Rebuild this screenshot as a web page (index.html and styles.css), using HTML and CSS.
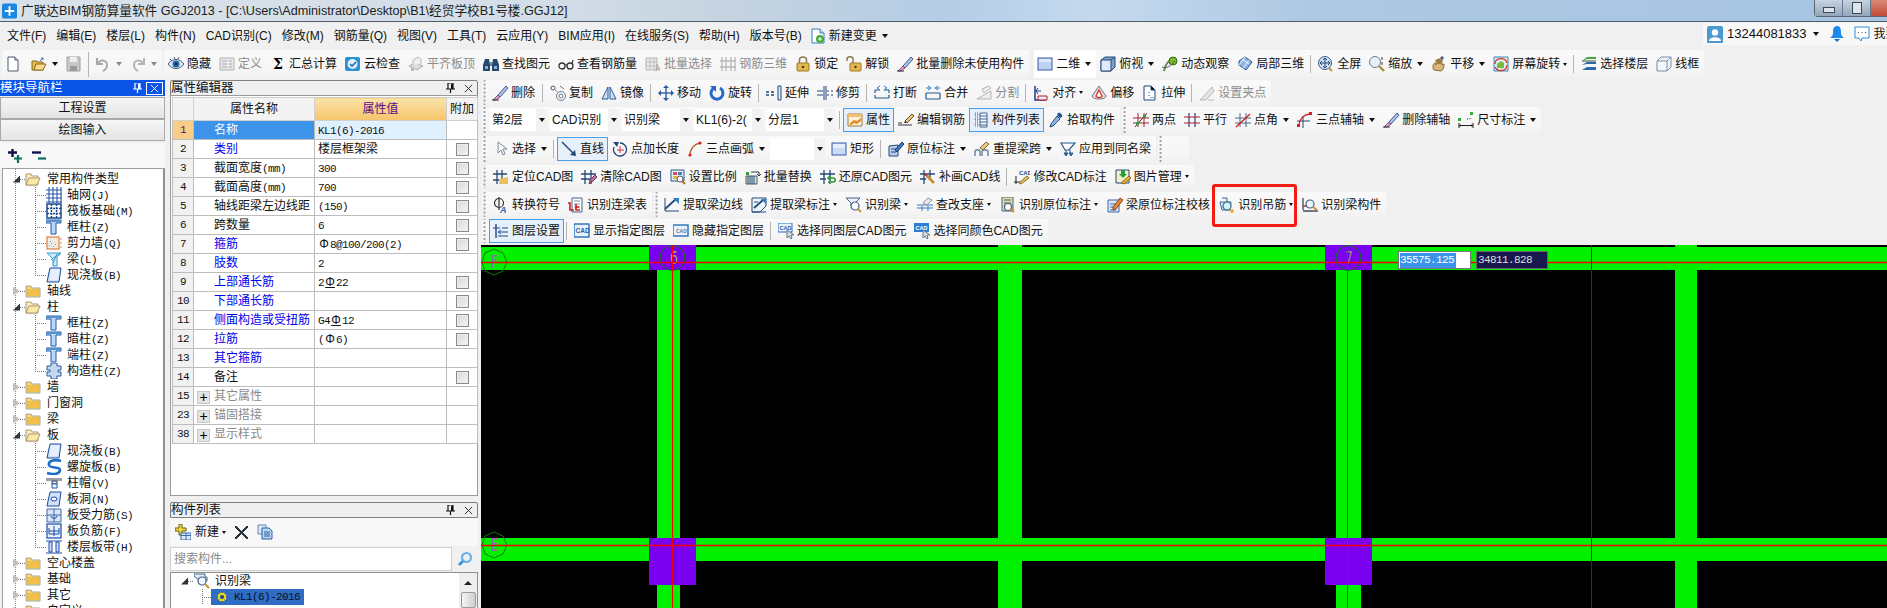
FILE: index.html
```html
<!DOCTYPE html>
<html lang="zh-CN">

<head>
    <meta charset="UTF-8">
    <title>广联达BIM钢筋算量软件 GGJ2013</title>
    <link rel="stylesheet" href="styles.css">
</head>

<body>
    <svg class="defs" width="0" height="0">
        <!-- main toolbar -->
        <symbol id="i-new" viewBox="0 0 16 16"><path d="M1 1h7l3 3v11H1z" fill="#fff" stroke="#4a5a70"/><path d="M8 1v3h3" fill="#cfe0f0" stroke="#4a5a70"/></symbol>
        <symbol id="i-open" viewBox="0 0 16 16"><path d="M1 5h5l1 1h5v8H1z" fill="#e6b84a" stroke="#8a6a20"/><path d="M3 14l2-6h10l-3 6z" fill="#f8dc88" stroke="#8a6a20"/><path d="M9 5l3-3M12 2h-2M12 2v2" stroke="#3a6ab0" fill="none"/></symbol>
        <symbol id="i-save" viewBox="0 0 16 16"><path d="M1 1h13v14H1z" fill="#c8c8c8" stroke="#a0a0a0"/><path d="M4 1h7v5H4z" fill="#eee"/><path d="M4 10h7v5H4z" fill="#9a9a9a"/></symbol>
        <symbol id="i-undo" viewBox="0 0 16 16"><path d="M2 2v6h6M3 7c3-4 9-3 9 2 0 3-2 5-4 6" fill="none" stroke="#a8a8a8" stroke-width="2"/></symbol>
        <symbol id="i-redo" viewBox="0 0 16 16"><path d="M14 2v6H8M13 7c-3-4-9-3-9 2 0 3 2 5 4 6" fill="none" stroke="#b4b4b4" stroke-width="2"/></symbol>
        <symbol id="i-eye" viewBox="0 0 16 16"><path d="M0 8c4-6 12-6 16 0-4 6-12 6-16 0z" fill="#dce8f4" stroke="#44607e"/><circle cx="8" cy="8" r="3.5" fill="#2a6aa8"/><circle cx="8" cy="8" r="1.4" fill="#0c2a48"/><path d="M2 3l2 2M6 1l1 2M11 1l-1 2" stroke="#44607e"/></symbol>
        <symbol id="i-def" viewBox="0 0 16 16"><path d="M1 2h14v12H1z" fill="#e8e8e8" stroke="#b0b0b0"/><path d="M3 5h5M3 8h5M3 11h5M10 5h3M10 8h3M10 11h3" stroke="#a8a8a8"/></symbol>
        <symbol id="i-cloud" viewBox="0 0 16 16"><rect x="0" y="1" width="15" height="14" rx="2" fill="#2a90d8"/><circle cx="7.500" cy="8" r="5" fill="#dff0fc"/><path d="M5 8l2 2 4-4" fill="none" stroke="#1a70b8" stroke-width="1.600"/></symbol>
        <symbol id="i-flush" viewBox="0 0 16 16"><path d="M1 10l6-3 8 3-6 4z" fill="#ddd" stroke="#b0b0b0"/><path d="M5 9V4l5-3 3 2v5" fill="#eee" stroke="#bbb"/><path d="M3 15v-4h3v4z" fill="#bbb"/></symbol>
        <symbol id="i-bino" viewBox="0 0 16 16"><path d="M2 3h4l1 6v6H0V9zM10 3h4l2 6v6H9V9z" fill="#24486e"/><path d="M7 6h2v4H7z" fill="#6a88a6"/><path d="M2 10h3v3H2zM11 10h3v3h-3z" fill="#8ab0d4"/></symbol>
        <symbol id="i-glasses" viewBox="0 0 16 16"><circle cx="4" cy="10" r="3" fill="none" stroke="#333" stroke-width="1.300"/><circle cx="12" cy="10" r="3" fill="none" stroke="#333" stroke-width="1.300"/><path d="M7 9h2M14 8l1-4" stroke="#333" stroke-width="1.200"/></symbol>
        <symbol id="i-batch" viewBox="0 0 16 16"><path d="M1 2h11v12H1z" fill="#ececec" stroke="#b4b4b4"/><path d="M1 6h11M1 10h11M5 2v12M9 2v12" stroke="#bcbcbc"/><path d="M12 8l3 6-3-1-1 2z" fill="#d0d0d0" stroke="#aaa"/></symbol>
        <symbol id="i-rebar3d" viewBox="0 0 16 16"><path d="M2 1v14M6 1v14M11 1v14M15 1v14M0 5h16M0 11h16" stroke="#b8b8b8" stroke-width="1.300"/></symbol>
        <symbol id="i-lock" viewBox="0 0 16 16"><path d="M4.500 7V4c0-4 7-4 7 0v3" fill="none" stroke="#8a7a50" stroke-width="1.500"/><rect x="2" y="7" width="12" height="8" rx="1" fill="#e4b850" stroke="#9a7a28"/><circle cx="8" cy="11" r="1.300" fill="#5a4010"/></symbol>
        <symbol id="i-unlock" viewBox="0 0 16 16"><path d="M1 5V3c0-3 6-3 6 0v4" fill="none" stroke="#8a7a50" stroke-width="1.500"/><rect x="4" y="7" width="11" height="8" rx="1" fill="#e4b850" stroke="#9a7a28"/><circle cx="9.500" cy="11" r="1.300" fill="#5a4010"/></symbol>
        <symbol id="i-brush" viewBox="0 0 16 16"><path d="M6 10l8-9 2 2-8 9z" fill="#b0c4e8" stroke="#3a5a9a"/><path d="M6 10l2 2-4 3-3 0z" fill="#e8a0c0" stroke="#7a4a7a"/><path d="M0 15h7" stroke="#334"/></symbol>
        <symbol id="i-2d" viewBox="0 0 16 16"><rect x="1" y="2" width="14" height="12" fill="#bcd4f4" stroke="#3a5aa8"/><path d="M2 3h12v3H2z" fill="#dceafa"/></symbol>
        <symbol id="i-top" viewBox="0 0 16 16"><path d="M1 4l4-3h10v10l-4 4H1z" fill="#7aa0cc" stroke="#2a4a78"/><path d="M1 4h10v11H1z" fill="#dfeafa" stroke="#2a4a78"/><path d="M11 4l4-3" stroke="#2a4a78"/></symbol>
        <symbol id="i-orbit" viewBox="0 0 16 16"><path d="M2 15C3 9 7 4 12 2" fill="none" stroke="#7a8a50" stroke-width="2"/><circle cx="11" cy="5" r="4" fill="#7ab828" stroke="#3a6a10"/><path d="M0 11c4 2 9-1 13-6" fill="none" stroke="#3a5a7a"/></symbol>
        <symbol id="i-local3d" viewBox="0 0 16 16"><path d="M2 5l6-4 7 5-6 8-7-5z" fill="#8eb4e0" stroke="#2a5490"/><path d="M5 3l7 5M8 1L2 9M12 4l-6 8" stroke="#eef4fc"/></symbol>
        <symbol id="i-full" viewBox="0 0 16 16"><circle cx="7" cy="7" r="6.500" fill="#cfe0f4" stroke="#3a5a8a"/><path d="M7 2v10M2 7h10M5 4l2-2 2 2M5 10l2 2 2-2M4 5L2 7l2 2M10 5l2 2-2 2" fill="none" stroke="#24487a"/><path d="M11 12l3 3" stroke="#c89030" stroke-width="2"/></symbol>
        <symbol id="i-zoom" viewBox="0 0 16 16"><circle cx="6" cy="6" r="5.500" fill="#e6eef8" stroke="#70808f"/><path d="M10 10l5 5" stroke="#a88a40" stroke-width="2.400"/><path d="M13 1v3M13 6v3" stroke="#333"/></symbol>
        <symbol id="i-pan" viewBox="0 0 16 16"><path d="M3 14c-2-3-1-6 1-7l1 2V4h2v4V3h2v5V4h2v5l2-1c0 4-1 6-3 7z" fill="#d8b878" stroke="#8a6a30"/><path d="M11 0v4M9 2h4" stroke="#334"/></symbol>
        <symbol id="i-screenrot" viewBox="0 0 16 16"><path d="M1 1h14v14H1z" fill="#d8ecf8" stroke="#3a8ab0"/><path d="M4 12V8l4-3 3 2v5z" fill="#7ab838"/><path d="M2 8c0-7 11-7 12-1M14 9c0 7-10 7-12 2" fill="none" stroke="#e03020" stroke-width="1.300"/></symbol>
        <symbol id="i-floor" viewBox="0 0 16 16"><path d="M1 5l5-4h9v2H6z" fill="#48a048"/><path d="M1 9l5-3h9v2H6zM1 14l5-3h9v3H1z" fill="#2a68b0"/><path d="M1 5h14" stroke="#2a5a2a"/></symbol>
        <symbol id="i-wire" viewBox="0 0 16 16"><path d="M1 5h10v10H1zM1 5l4-4h10v10l-4 4M11 5l4-4" fill="#f4f6fa" stroke="#7a8ea8"/></symbol>
        <!-- row 1 -->
        <symbol id="i-copy" viewBox="0 0 16 16"><circle cx="3" cy="3" r="2" fill="#fff" stroke="#556"/><path d="M5 5l3 2" stroke="#556" stroke-dasharray="1 1"/><circle cx="11" cy="11" r="4.500" fill="none" stroke="#6a7a90"/><circle cx="11" cy="11" r="2" fill="none" stroke="#6a7a90"/><path d="M10 1l4 3" stroke="#6a7a90"/></symbol>
        <symbol id="i-mirror" viewBox="0 0 16 16"><path d="M7 2L1 14h6zM9 2l6 12H9z" fill="#cfe0f4" stroke="#2a5a98"/></symbol>
        <symbol id="i-move" viewBox="0 0 16 16"><path d="M8 1v14M1 8h14" stroke="#3a6aa8" stroke-width="1.500"/><path d="M8 0l3 3H5zM8 16l3-3H5zM0 8l3-3v6zM16 8l-3-3v6z" fill="#2a5a98"/></symbol>
        <symbol id="i-rotate" viewBox="0 0 16 16"><path d="M5 3a6 6 0 1 0 6 0" fill="none" stroke="#2a68c8" stroke-width="3"/><path d="M1 1h6v6z" fill="#2a68c8"/></symbol>
        <symbol id="i-extend" viewBox="0 0 16 16"><path d="M0 7h3M5 7h3M0 10h3M5 10h3" stroke="#24487a" stroke-width="1.300"/><path d="M12 1h3v14h-3z" fill="#dceafa" stroke="#24487a"/></symbol>
        <symbol id="i-trim" viewBox="0 0 16 16"><path d="M0 6h6M0 10h6M10 6h2M14 6h2M10 10h2M14 10h2" stroke="#24487a" stroke-width="1.200"/><path d="M7 1v14M9 1v14" stroke="#24487a"/></symbol>
        <symbol id="i-break" viewBox="0 0 16 16"><path d="M1 5h5M10 5h5M1 13h14M1 5v3M15 5v3M1 13v-3M15 13v-3" stroke="#24568a" stroke-width="1.200"/><path d="M6 1L3 3l3 2M10 1l3 2-3 2" fill="none" stroke="#2a80c8"/></symbol>
        <symbol id="i-merge" viewBox="0 0 16 16"><path d="M1 8h14M1 14h14M1 8v6M15 8v6" stroke="#24568a" stroke-width="1.200"/><path d="M1 3h4M11 3h4M3 1l3 2-3 2M13 1l-3 2 3 2" fill="none" stroke="#2a80c8"/></symbol>
        <symbol id="i-split" viewBox="0 0 16 16"><path d="M1 14h14V6L1 14zM6 4l7-3 2 2-7 5z" fill="#eee" stroke="#b4b4b4"/></symbol>
        <symbol id="i-align" viewBox="0 0 16 16"><path d="M2 1v14h11" fill="none" stroke="#1a3a8a" stroke-width="1.500"/><path d="M5 11h9v4H5z" fill="#e8e8f8" stroke="#b02020"/><path d="M8 6H4M5 3L3 6l2 3" fill="none" stroke="#1a3a8a"/></symbol>
        <symbol id="i-offset" viewBox="0 0 16 16"><path d="M8 1l7 10c0 4-14 4-14 0z" fill="#f4d8d8" stroke="#6a7a90"/><path d="M8 5l3 6c0 2-6 2-6 0z" fill="#fff" stroke="#d03838" stroke-width="1.300"/></symbol>
        <symbol id="i-stretch" viewBox="0 0 16 16"><path d="M2 1h7l4 4v10H2z" fill="#fff" stroke="#24487a"/><path d="M9 1v4h4M7 7v1M7 10v1M9 12v1M11 12v1" stroke="#24487a"/></symbol>
        <symbol id="i-grippt" viewBox="0 0 16 16"><path d="M1 15h6l8-9-2-4-8 9z" fill="#e4e4e4" stroke="#b8b8b8"/><path d="M9 15h6" stroke="#c0c0c0"/></symbol>
        <!-- row 2 -->
        <symbol id="i-props" viewBox="0 0 16 16"><path d="M1 2h14v12H1z" fill="#fff0d8" stroke="#9a7a40"/><path d="M1 2h14v3H1z" fill="#f0c070"/><path d="M3 11l4-3 3 1 4-3v3l-4 3-3-1-4 3z" fill="#e09028"/></symbol>
        <symbol id="i-pen" viewBox="0 0 16 16"><path d="M7 9l7-7 2 2-7 7z" fill="#e8c880" stroke="#6a5020"/><path d="M7 9l2 2-3 0z" fill="#333"/><path d="M0 11h4M0 13h14" stroke="#333"/></symbol>
        <symbol id="i-list" viewBox="0 0 16 16"><path d="M2 1h3v3H2zM2 6h3v3H2zM2 11h3v3H2z" fill="none" stroke="#44648a" stroke-dasharray="1 1"/><path d="M7 1h7v14H7z" fill="#f4f8fc" stroke="#44648a"/><path d="M7 4h7M7 7h7M7 10h7M7 13h7" stroke="#44648a"/></symbol>
        <symbol id="i-pick" viewBox="0 0 16 16"><path d="M10 1c2-1 5 2 4 4l-2 1-3-3z" fill="#24568a"/><path d="M9 4l3 3-7 7-3 1 1-3z" fill="#8ab8e8" stroke="#24487a"/></symbol>
        <symbol id="i-twopt" viewBox="0 0 16 16"><path d="M5 1v14M11 1v14M0 6h16M0 11h16" stroke="#a82030"/><path d="M2 15L14 1" stroke="#334"/><rect x="3" y="10" width="3" height="3" fill="#3a9a3a"/><rect x="10" y="3" width="3" height="3" fill="#3a9a3a"/></symbol>
        <symbol id="i-parallel" viewBox="0 0 16 16"><path d="M5 1v14M11 1v14" stroke="#24487a" stroke-width="1.200"/><path d="M0 5h16M0 11h16" stroke="#a82030" stroke-width="1.200"/></symbol>
        <symbol id="i-angle" viewBox="0 0 16 16"><path d="M5 1v14M11 1v14M0 6h16M0 11h16" stroke="#24487a" stroke-width=".8"/><path d="M1 15L15 2" stroke="#d82020" stroke-width="1.400"/></symbol>
        <symbol id="i-arcaxis" viewBox="0 0 16 16"><path d="M6 4v12M0 9h13" stroke="#24487a"/><path d="M2 14C2 7 7 2 14 2" fill="none" stroke="#d82020" stroke-width="1.300"/><rect x="12" y="0" width="3" height="3" fill="#d82020"/><rect x="0" y="12" width="3" height="3" fill="#d82020"/></symbol>
        <symbol id="i-dim" viewBox="0 0 16 16"><rect x="0" y="6" width="3" height="3" fill="#3aa83a"/><rect x="12" y="0" width="3" height="3" fill="#3aa83a"/><path d="M1 11v5M15 11v5M1 13.500h14" stroke="#222"/><path d="M3 13l-2 .5 2 .5M13 13l2 .5-2 .5M12 6v1M9 7h1" stroke="#222"/></symbol>
        <!-- row 3 -->
        <symbol id="i-cursor" viewBox="0 0 16 16"><path d="M5 1v11l3-3 2 5 2-1-2-5h4z" fill="#f8f8fc" stroke="#7a8a9a"/></symbol>
        <symbol id="i-line" viewBox="0 0 16 16"><path d="M1 1l13 13" stroke="#24487a" stroke-width="1.400"/><path d="M15 15l-6-1 5-5z" fill="#24487a"/></symbol>
        <symbol id="i-ptlen" viewBox="0 0 16 16"><path d="M8 2a6.500 6.500 0 1 1-6 4" fill="none" stroke="#24487a" stroke-width="1.300"/><path d="M1 1l6 0-2 5z" fill="#24487a"/><path d="M8 5v7M5 9h7" stroke="#d83030"/></symbol>
        <symbol id="i-arc" viewBox="0 0 16 16"><path d="M3 14C3 8 7 3 13 2" fill="none" stroke="#b86030" stroke-width="1.500"/><circle cx="3" cy="14" r="1.600" fill="#d82020"/><circle cx="13" cy="2" r="1.600" fill="#d82020"/></symbol>
        <symbol id="i-rect" viewBox="0 0 16 16"><rect x="1" y="2" width="14" height="12" fill="#c8dcf8" stroke="#3a5aa8"/><path d="M2 3h12v4H2z" fill="#e4eefc"/></symbol>
        <symbol id="i-mark" viewBox="0 0 16 16"><path d="M1 5l9-1v11H1z" fill="#b8d0ec" stroke="#24487a"/><path d="M3 8h5M3 11h5" stroke="#24487a"/><path d="M7 9l7-8 2 2-7 8z" fill="#3a78c0" stroke="#1a3a70"/></symbol>
        <symbol id="i-respan" viewBox="0 0 16 16"><path d="M1 15v-4c0-3 5-3 5 0v4M8 15v-4c0-3 6-3 6 0v4" fill="none" stroke="#6a88a8" stroke-width="1.500"/><path d="M6 7l6-6 3 2-6 6z" fill="#e8c880" stroke="#8a6a30"/></symbol>
        <symbol id="i-apply" viewBox="0 0 16 16"><path d="M1 2h14L9 9H5z" fill="#fff" stroke="#24568a" stroke-width="1.200"/><path d="M6 9v4M10 9v4M6 15l-2-3h4zM11 15l-2-3h4z" fill="#2a80c8" stroke="#24568a"/></symbol>
        <!-- row 4 -->
        <symbol id="i-locate" viewBox="0 0 16 16"><path d="M4 1v14M9 1v14M0 5h14M0 11h6" stroke="#24487a" stroke-width="1.300"/><path d="M6 10l9-2v7H6z" fill="#e8c060"/></symbol>
        <symbol id="i-clear" viewBox="0 0 16 16"><path d="M4 1v14M10 1v14M0 5h15M0 10h9" stroke="#24487a" stroke-width="1.300"/><path d="M9 11l5-5 2 2-5 5zM9 11l2 2-3 2z" fill="#c070a0" stroke="#6a3a5a"/></symbol>
        <symbol id="i-scale" viewBox="0 0 16 16"><path d="M1 1h13v11H1z" fill="#e8f0f8" stroke="#24568a"/><path d="M3 3h4v3H3z" fill="#d85050"/><path d="M8 3h4v3H8z" fill="#4a80c8"/><path d="M3 7h4v3H3z" fill="#e0b840"/><circle cx="10" cy="10" r="3" fill="#fff" stroke="#556"/><path d="M12 12l3 3" stroke="#a87030" stroke-width="2"/></symbol>
        <symbol id="i-replace" viewBox="0 0 16 16"><path d="M1 3h3v3H1z" fill="#3a9a3a"/><path d="M1 7h11v8H1z" fill="#d8e8d8" stroke="#556"/><path d="M3 7v8M5 7v8M7 7v8M9 7v8" stroke="#24487a"/><path d="M6 3h8v3M12 5l2 2 2-2" fill="none" stroke="#334"/></symbol>
        <symbol id="i-restore" viewBox="0 0 16 16"><path d="M4 1v14M10 1v14M0 5h15M0 10h6" stroke="#24487a" stroke-width="1.300"/><path d="M8 13h5c3 0 3-4 0-4H9M10 7L8 9l2 2" fill="none" stroke="#2a9a2a" stroke-width="1.600"/></symbol>
        <symbol id="i-patch" viewBox="0 0 16 16"><path d="M4 1v14M10 1v10M0 5h15M0 10h6" stroke="#24487a" stroke-width="1.300"/><path d="M7 7l7 7" stroke="#c89030" stroke-width="3"/><path d="M5 5l2 2" stroke="#c03030" stroke-width="2"/></symbol>
        <symbol id="i-cadmark" viewBox="0 0 16 16"><path d="M2 7v8M0 13h8" stroke="#222"/><text x="5" y="6" font-size="6" font-weight="bold" fill="#24487a" font-family="Liberation Sans">CAD</text><path d="M5 14l8-7 2 2-8 6z" fill="#e8c060" stroke="#8a6a20"/></symbol>
        <symbol id="i-pic" viewBox="0 0 16 16"><path d="M1 1h13v13H1z" fill="#f4f0c8" stroke="#24487a"/><path d="M6 1h4v4h2l-4 4-4-4h2z" fill="#2a9a3a"/><path d="M6 14l8-7 2 2-7 6z" fill="#e8b030" stroke="#8a6a20"/></symbol>
        <!-- row 5 -->
        <symbol id="i-symbol" viewBox="0 0 16 16"><circle cx="6" cy="6" r="4.500" fill="none" stroke="#333" stroke-width="1.200"/><path d="M6 0v13" stroke="#333" stroke-width="1.200"/><text x="7" y="16" font-size="9" font-weight="bold" font-style="italic" fill="#2a68b8" font-family="Liberation Sans">A</text></symbol>
        <symbol id="i-beamtable" viewBox="0 0 16 16"><path d="M4 1h10v14H4z" fill="#fff" stroke="#44648a"/><path d="M6 4h6M6 7h6M6 10h6" stroke="#88a"/><path d="M0 6h2v7h4M8 7v6h4M8 10h3" fill="none" stroke="#c82020" stroke-width="1.600"/></symbol>
        <symbol id="i-edge" viewBox="0 0 16 16"><path d="M1 14h14M1 1v13" stroke="#24487a"/><path d="M1 12L12 2" stroke="#24487a" stroke-width="1.800"/><path d="M9 1h6v6z" fill="#2a80c8"/></symbol>
        <symbol id="i-label" viewBox="0 0 16 16"><path d="M1 1h14v8l-6 6H1z" fill="#eef4fa" stroke="#24487a"/><path d="M3 11L12 3" stroke="#24487a" stroke-width="1.800"/><path d="M10 2h5v5z" fill="#2a80c8"/><path d="M3 5h4M1 15h14" stroke="#24487a"/></symbol>
        <symbol id="i-recog" viewBox="0 0 16 16"><path d="M0 1h14l-5 5v3H5V6z" fill="#eef2f8" stroke="#44648a"/><circle cx="9" cy="9" r="4" fill="#fff" stroke="#44648a" stroke-width="1.200"/><path d="M12 12l3 3" stroke="#c89030" stroke-width="2"/></symbol>
        <symbol id="i-support" viewBox="0 0 16 16"><path d="M0 8h16M0 11h16" stroke="#3a78c0"/><path d="M5 14V9M11 14V9" stroke="#3a78c0"/><path d="M6 6l5-5 4 2-5 5z" fill="#e8e8ec" stroke="#8a94a0"/></symbol>
        <symbol id="i-origmark" viewBox="0 0 16 16"><path d="M2 0h11v14H2z" fill="#e8dc9a" stroke="#44648a"/><path d="M4 3h7M4 6h7" stroke="#44648a"/><circle cx="8" cy="10" r="3.500" fill="#fff" stroke="#44648a" stroke-width="1.200"/><path d="M10 12l4 3" stroke="#c89030" stroke-width="2"/></symbol>
        <symbol id="i-verify" viewBox="0 0 16 16"><path d="M1 3h11v12H1z" fill="#dce8f8" stroke="#3a68a8"/><path d="M3 7h6M3 10h6M3 13h6" stroke="#3a68a8"/><path d="M6 10l7-9 3 2-7 9-3 1z" fill="#e88030" stroke="#8a4a20"/></symbol>
        <symbol id="i-hanger" viewBox="0 0 16 16"><path d="M3 1h5v4M1 5h11l-1 8H3z" fill="#e6f0fa" stroke="#44648a"/><circle cx="8" cy="9" r="4" fill="#d8f0f4" stroke="#2a6a9a" stroke-width="1.200"/><circle cx="13" cy="14" r="2" fill="#e8b030"/></symbol>
        <symbol id="i-beamcomp" viewBox="0 0 16 16"><path d="M1 1v12M1 14h15" stroke="#44485a" stroke-width="1.300"/><path d="M1 9h8" stroke="#c83020" stroke-width="1.500"/><circle cx="8" cy="7" r="4" fill="#eef4fa" stroke="#44648a" stroke-width="1.200"/><path d="M11 10l4 3" stroke="#c89030" stroke-width="2"/></symbol>
        <!-- row 6 -->
        <symbol id="i-layers" viewBox="0 0 16 16"><path d="M3 1v14" stroke="#24487a" stroke-width="1.400"/><path d="M0 5h7M5 9h10M5 13h10M9 5h6" stroke="#24487a"/><path d="M8 7L5 9l3 2" fill="none" stroke="#2a60c8"/></symbol>
        <symbol id="i-cadshow" viewBox="0 0 16 16"><rect x="0" y="1" width="15" height="13" fill="#e8f2fc" stroke="#2a70b8" stroke-width="1.400"/><text x="1.500" y="10" font-size="6.500" font-weight="bold" fill="#2a60a8" font-family="Liberation Sans">CAD</text></symbol>
        <symbol id="i-cadhide" viewBox="0 0 16 16"><rect x="0" y="2" width="15" height="11" fill="#e8f2fc" stroke="#2a70b8" stroke-width="1.400"/><text x="3" y="9.500" font-size="5" font-weight="bold" fill="#6a7a90" font-family="Liberation Sans">CAD</text></symbol>
        <symbol id="i-cadsel" viewBox="0 0 16 16"><rect x="0" y="0" width="14" height="9" fill="#e8f2fc" stroke="#2a70b8"/><text x="1.500" y="7" font-size="5.500" font-weight="bold" fill="#2a60a8" font-family="Liberation Sans">CAD</text><path d="M9 7v8l2-2 2 3 1-1-1-3h3z" fill="#d8dce4" stroke="#6a7a8a"/></symbol>
        <symbol id="i-cadsel2" viewBox="0 0 16 16"><rect x="0" y="0" width="15" height="9" fill="#2a80d8"/><text x="1.500" y="7" font-size="5.500" font-weight="bold" fill="#fff" font-family="Liberation Sans">CAD</text><path d="M9 7v8l2-2 2 3 1-1-1-3h3z" fill="#d8dce4" stroke="#6a7a8a"/></symbol>
        <!-- tree -->
        <symbol id="i-folder" viewBox="0 0 16 16"><path d="M1 3h5l1 2h8v9H1z" fill="#f4d478" stroke="#a8a8a0"/><path d="M2 6h12v7H2z" fill="#f0c048"/></symbol>
        <symbol id="i-folderopen" viewBox="0 0 16 16"><path d="M1 3h5l1 2h6v9H1z" fill="#fbeec0" stroke="#a89a70"/><path d="M1 14l3-7h11l-3 7z" fill="#fde8a8" stroke="#a89a70"/></symbol>
        <symbol id="i-grid" viewBox="0 0 16 16"><path d="M0 3h16M0 7h16M0 11h16M0 15h16M3 0v16M7 0v16M11 0v16M15 0v16" stroke="#2a5aa8" stroke-width="1.100"/></symbol>
        <symbol id="i-raft" viewBox="0 0 16 16"><rect x="1" y="1" width="14" height="14" fill="#fff" stroke="#1a4a8a" stroke-width="1.500"/><path d="M1 5.500h14M1 10.500h14M5.500 1v14M10.500 1v14" stroke="#1a4a8a" stroke-width="1.500" stroke-dasharray="2 1"/></symbol>
        <symbol id="i-col" viewBox="0 0 16 16"><path d="M0 1h15v3H10v11H5V4H0z" fill="#bcd8f4" stroke="#1a5aa8"/><path d="M0 1h15v2H0z" fill="#5a90c8"/></symbol>
        <symbol id="i-wall" viewBox="0 0 16 16"><rect x="1" y="2" width="12" height="12" fill="#eeeae4" stroke="#e08040" stroke-width="1.200"/><path d="M3 10l1 1M5 8l1 1M7 11l1 1M9 9l1 1M4 6l1 1" stroke="#999"/><path d="M14 4h2M14 8h2M14 12h2" stroke="#e08040"/></symbol>
        <symbol id="i-beam" viewBox="0 0 16 16"><path d="M1 2h14l-4 4v9H7V8z" fill="#cfeaf8" stroke="#3a98c8"/><path d="M5 9l9-7M7 12l4-9" stroke="#3a98c8"/></symbol>
        <symbol id="i-slab" viewBox="0 0 16 16"><path d="M4 1h11l-2 14H1z" fill="#cfe0f8" stroke="#1a4aa8"/><path d="M5 2h9l-2 11H3z" fill="#e6f0fc"/></symbol>
        <symbol id="i-ctcol" viewBox="0 0 16 16"><path d="M5 0h6v3h4v4h-3v2h3v4h-4v3H5v-3H1V9h3V7H1V3h4z" fill="#c4d8f0" stroke="#2a5aa0"/></symbol>
        <symbol id="i-spiral" viewBox="0 0 16 16"><path d="M15 2C8 0 2 2 3 6s11 1 11 5-6 5-13 3" fill="none" stroke="#1a70c8" stroke-width="2.600"/></symbol>
        <symbol id="i-cap" viewBox="0 0 16 16"><path d="M0 3h16v3H0z" fill="#9aa0a8"/><path d="M6 6h5v3H6z" fill="#d8e0ea" stroke="#446"/><path d="M6 9h5v4H6z" fill="#fff" stroke="#1a5aa8"/></symbol>
        <symbol id="i-hole" viewBox="0 0 16 16"><path d="M4 1h11l-2 14H1z" fill="#cfe0f8" stroke="#1a4aa8"/><ellipse cx="8" cy="8" rx="3" ry="2" fill="#fff" stroke="#1a4aa8"/></symbol>
        <symbol id="i-slabbar" viewBox="0 0 16 16"><path d="M1 2h14v13H1z" fill="#d8e6f8" stroke="#3a68a8"/><path d="M8 2v13M1 8h14" stroke="#3a68a8"/><path d="M5 9c0 3 6 3 6 0" fill="none" stroke="#1a4a8a"/></symbol>
        <symbol id="i-slabneg" viewBox="0 0 16 16"><rect x="1" y="1" width="14" height="14" fill="#eaf2fc" stroke="#1a4aa8" stroke-width="1.200"/><path d="M3 8h10M8 3v10M3 5v6h10V5" fill="none" stroke="#1a4aa8"/></symbol>
        <symbol id="i-band" viewBox="0 0 16 16"><path d="M0 2h16M0 14h16" stroke="#1a4aa8"/><path d="M3 3h3v10H3zM10 3h3v10h-3z" fill="#cfe0f8" stroke="#1a4aa8"/></symbol>
        <symbol id="i-beamroot" viewBox="0 0 16 16"><path d="M0 1h11v3h2v4H6L0 3z" fill="#e0ecf8" stroke="#44648a"/><circle cx="8" cy="8" r="4" fill="#f4f8fc" stroke="#44648a" stroke-width="1.200"/><path d="M11 11l4 4" stroke="#c89030" stroke-width="2"/></symbol>
        <symbol id="i-gear" viewBox="0 0 16 16"><circle cx="8" cy="8" r="4.500" fill="none" stroke="#f0e020" stroke-width="3"/><path d="M8 1v14M1 8h14M3 3l10 10M13 3L3 13" stroke="#3a3a10" stroke-width="1" stroke-dasharray="2 10"/><circle cx="8" cy="8" r="2" fill="#444"/></symbol>
        <symbol id="i-expand" viewBox="0 0 16 14"><path d="M1 3.500h9M5.500 0v8" stroke="#10104a" stroke-width="2.400"/><path d="M7 9.500h8M11 6v8" stroke="#0a6e62" stroke-width="2.200"/></symbol>
        <symbol id="i-collapse" viewBox="0 0 16 14"><path d="M1 3.500h9" stroke="#10104a" stroke-width="2.400"/><path d="M7 9.500h8" stroke="#0a6e62" stroke-width="2.200"/></symbol>
        <!-- misc -->
        <symbol id="i-logo" viewBox="0 0 16 16"><rect width="16" height="16" rx="2" fill="#1a88e0"/><path d="M7 3v4H3v2h4v4h2V9h4V7H9V3z" fill="#fff"/></symbol>
        <symbol id="i-change" viewBox="0 0 16 16"><path d="M2 1h8l4 4v10H2z" fill="#fff" stroke="#2a80c8"/><path d="M10 1v4h4" fill="#cfe4f8" stroke="#2a80c8"/><circle cx="10" cy="11" r="4" fill="#48a838"/><path d="M8 11h4M10 9v4" stroke="#fff"/></symbol>
        <symbol id="i-user" viewBox="0 0 16 16"><rect width="16" height="18" rx="2" fill="#4a9ad0"/><circle cx="8" cy="6.500" r="3.200" fill="#fff"/><path d="M2 15c0-5 12-5 12 0z" fill="#fff"/></symbol>
        <symbol id="i-bell" viewBox="0 0 16 16"><path d="M8 0c4 0 4 4 4 7s2 4 3 5H1c1-1 3-2 3-5s0-7 4-7z" fill="#1a88ec"/><path d="M5 13h6l-3 3z" fill="#1a6ac0"/></symbol>
        <symbol id="i-chat" viewBox="0 0 16 16"><path d="M1 1h14v11H8l-1 3-2-3H1z" fill="#fff" stroke="#2a90e0"/><path d="M4 6.500h1M7.500 6.500h1M11 6.500h1" stroke="#555"/></symbol>
        <symbol id="i-pin" viewBox="0 0 10 10"><path d="M3 0h5v6H3zM1 6h9M5.500 6v4" fill="none" stroke="currentColor" stroke-width="1.200"/><path d="M6 1h2v5H6z" fill="currentColor"/></symbol>
        <symbol id="i-x" viewBox="0 0 10 10"><path d="M1 1l8 8M9 1L1 9" stroke="currentColor" fill="none"/></symbol>
        <symbol id="i-add" viewBox="0 0 16 16"><path d="M4 0h3v4h4v3H7v4H4V7H0V4h4z" fill="#f0d840" stroke="#6a5a10"/><path d="M6 9h10v7H6z" fill="#dce8f8" stroke="#3a68a8"/><path d="M6 11.500h10M11 9v7" stroke="#3a68a8"/></symbol>
        <symbol id="i-dup" viewBox="0 0 16 16"><path d="M1 1h8v9H1z" fill="#dce8f8" stroke="#6a88b0"/><path d="M5 4h7l3 3v8H5z" fill="#bcd8f4" stroke="#2a5aa0"/><path d="M7 8h6M7 10h6M7 12h6" stroke="#2a5aa0"/></symbol>
        <symbol id="i-search" viewBox="0 0 16 16"><circle cx="9.500" cy="6.500" r="4.500" fill="none" stroke="#6ab0e8" stroke-width="2.200"/><path d="M6 10l-4 4" stroke="#3a90d8" stroke-width="2.600"/></symbol>
    </svg>

    <div class="titlebar">
        <svg class="logo"><use href="#i-logo"/></svg>
        <span class="title-text">广联达BIM钢筋算量软件 GGJ2013 - [C:\Users\Administrator\Desktop\B1\经贸学校B1号楼.GGJ12]</span>
        <div class="win-btns">
            <div class="win-btn"><span class="win-min"></span></div>
            <div class="win-btn"><span class="win-max"></span></div>
            <div class="win-btn win-close"></div>
        </div>
    </div>

    <div class="menubar">
        <span>文件(F)</span><span>编辑(E)</span><span>楼层(L)</span><span>构件(N)</span><span>CAD识别(C)</span><span>修改(M)</span><span>钢筋量(Q)</span><span>视图(V)</span><span>工具(T)</span><span>云应用(Y)</span><span>BIM应用(I)</span><span>在线服务(S)</span><span>帮助(H)</span><span>版本号(B)</span>
        <div class="menu-change">
            <svg class="ic"><use href="#i-change"/></svg>新建变更<i class="arr"></i>
        </div>
        <div class="user-box">
            <svg class="ic user-ic"><use href="#i-user"/></svg>
            <span class="user-phone">13244081833</span><i class="arr"></i>
            <svg class="ic bell-ic"><use href="#i-bell"/></svg>
            <svg class="ic"><use href="#i-chat"/></svg>
            <span>我要</span>
        </div>
    </div>

    <div class="bar-row main-row">
        <div class="bar file-bar">
            <div class="btn"><svg class="ic"><use href="#i-new"/></svg></div>
            <div class="btn"><svg class="ic"><use href="#i-open"/></svg><i class="arr"></i></div>
            <div class="btn"><svg class="ic"><use href="#i-save"/></svg></div>
            <b class="sep tall"></b>
            <div class="btn"><svg class="ic"><use href="#i-undo"/></svg><i class="arr off"></i></div>
            <div class="btn"><svg class="ic"><use href="#i-redo"/></svg><i class="arr off"></i></div>
        </div>
        <div class="bar no-grip">
            <div class="btn"><svg class="ic"><use href="#i-eye"/></svg>隐藏</div>
            <div class="btn off"><svg class="ic"><use href="#i-def"/></svg>定义</div>
            <div class="btn"><span class="ic sigma">Σ</span>汇总计算</div>
            <div class="btn"><svg class="ic"><use href="#i-cloud"/></svg>云检查</div>
            <div class="btn off"><svg class="ic"><use href="#i-flush"/></svg>平齐板顶</div>
            <div class="btn"><svg class="ic"><use href="#i-bino"/></svg>查找图元</div>
            <div class="btn"><svg class="ic"><use href="#i-glasses"/></svg>查看钢筋量</div>
            <div class="btn off"><svg class="ic"><use href="#i-batch"/></svg>批量选择</div>
            <div class="btn off"><svg class="ic"><use href="#i-rebar3d"/></svg>钢筋三维</div>
            <div class="btn"><svg class="ic"><use href="#i-lock"/></svg>锁定</div>
            <div class="btn"><svg class="ic"><use href="#i-unlock"/></svg>解锁</div>
            <div class="btn"><svg class="ic"><use href="#i-brush"/></svg>批量删除未使用构件</div>
        </div>
        <div class="bar no-grip view-bar">
            <div class="btn view-combo"><svg class="ic"><use href="#i-2d"/></svg>二维<i class="arr"></i></div>
            <div class="btn"><svg class="ic"><use href="#i-top"/></svg>俯视<i class="arr"></i></div>
            <div class="btn"><svg class="ic"><use href="#i-orbit"/></svg>动态观察</div>
            <div class="btn"><svg class="ic"><use href="#i-local3d"/></svg>局部三维</div>
            <b class="sep"></b>
            <div class="btn"><svg class="ic"><use href="#i-full"/></svg>全屏</div>
            <div class="btn"><svg class="ic"><use href="#i-zoom"/></svg>缩放<i class="arr"></i></div>
            <div class="btn"><svg class="ic"><use href="#i-pan"/></svg>平移<i class="arr"></i></div>
            <div class="btn"><svg class="ic"><use href="#i-screenrot"/></svg>屏幕旋转<i class="arr tight"></i></div>
            <b class="sep"></b>
            <div class="btn"><svg class="ic"><use href="#i-floor"/></svg>选择楼层</div>
            <div class="btn"><svg class="ic"><use href="#i-wire"/></svg>线框</div>
        </div>
    </div>

    <div class="workarea">
        <div class="nav-panel">
            <div class="panel-head head-blue">
                <span>模块导航栏</span>
                <svg class="pin"><use href="#i-pin"/></svg>
                <span class="head-close"><svg class="x"><use href="#i-x"/></svg></span>
            </div>
            <div class="nav-btn">工程设置</div>
            <div class="nav-btn">绘图输入</div>
            <div class="tree-tools">
                <svg class="tool-ic"><use href="#i-expand"/></svg>
                <svg class="tool-ic"><use href="#i-collapse"/></svg>
            </div>
            <div class="tree">
                <div class="tree-row"><i class="tw open"></i><b class="dots"></b><svg class="ic"><use href="#i-folderopen"/></svg><span>常用构件类型</span></div>
                <div class="tree-row child"><b class="branch"></b><svg class="ic"><use href="#i-grid"/></svg><span>轴网<em>(J)</em></span></div>
                <div class="tree-row child"><b class="branch"></b><svg class="ic"><use href="#i-raft"/></svg><span>筏板基础<em>(M)</em></span></div>
                <div class="tree-row child"><b class="branch"></b><svg class="ic"><use href="#i-col"/></svg><span>框柱<em>(Z)</em></span></div>
                <div class="tree-row child"><b class="branch"></b><svg class="ic"><use href="#i-wall"/></svg><span>剪力墙<em>(Q)</em></span></div>
                <div class="tree-row child"><b class="branch"></b><svg class="ic"><use href="#i-beam"/></svg><span>梁<em>(L)</em></span></div>
                <div class="tree-row child"><b class="branch last"></b><svg class="ic"><use href="#i-slab"/></svg><span>现浇板<em>(B)</em></span></div>
                <div class="tree-row"><i class="tw"></i><b class="dots"></b><svg class="ic"><use href="#i-folder"/></svg><span>轴线</span></div>
                <div class="tree-row"><i class="tw open"></i><b class="dots"></b><svg class="ic"><use href="#i-folderopen"/></svg><span>柱</span></div>
                <div class="tree-row child"><b class="branch"></b><svg class="ic"><use href="#i-col"/></svg><span>框柱<em>(Z)</em></span></div>
                <div class="tree-row child"><b class="branch"></b><svg class="ic"><use href="#i-col"/></svg><span>暗柱<em>(Z)</em></span></div>
                <div class="tree-row child"><b class="branch"></b><svg class="ic"><use href="#i-col"/></svg><span>端柱<em>(Z)</em></span></div>
                <div class="tree-row child"><b class="branch last"></b><svg class="ic"><use href="#i-ctcol"/></svg><span>构造柱<em>(Z)</em></span></div>
                <div class="tree-row"><i class="tw"></i><b class="dots"></b><svg class="ic"><use href="#i-folder"/></svg><span>墙</span></div>
                <div class="tree-row"><i class="tw"></i><b class="dots"></b><svg class="ic"><use href="#i-folder"/></svg><span>门窗洞</span></div>
                <div class="tree-row"><i class="tw"></i><b class="dots"></b><svg class="ic"><use href="#i-folder"/></svg><span>梁</span></div>
                <div class="tree-row"><i class="tw open"></i><b class="dots"></b><svg class="ic"><use href="#i-folderopen"/></svg><span>板</span></div>
                <div class="tree-row child"><b class="branch"></b><svg class="ic"><use href="#i-slab"/></svg><span>现浇板<em>(B)</em></span></div>
                <div class="tree-row child"><b class="branch"></b><svg class="ic"><use href="#i-spiral"/></svg><span>螺旋板<em>(B)</em></span></div>
                <div class="tree-row child"><b class="branch"></b><svg class="ic"><use href="#i-cap"/></svg><span>柱帽<em>(V)</em></span></div>
                <div class="tree-row child"><b class="branch"></b><svg class="ic"><use href="#i-hole"/></svg><span>板洞<em>(N)</em></span></div>
                <div class="tree-row child"><b class="branch"></b><svg class="ic"><use href="#i-slabbar"/></svg><span>板受力筋<em>(S)</em></span></div>
                <div class="tree-row child"><b class="branch"></b><svg class="ic"><use href="#i-slabneg"/></svg><span>板负筋<em>(F)</em></span></div>
                <div class="tree-row child"><b class="branch last"></b><svg class="ic"><use href="#i-band"/></svg><span>楼层板带<em>(H)</em></span></div>
                <div class="tree-row"><i class="tw"></i><b class="dots"></b><svg class="ic"><use href="#i-folder"/></svg><span>空心楼盖</span></div>
                <div class="tree-row"><i class="tw"></i><b class="dots"></b><svg class="ic"><use href="#i-folder"/></svg><span>基础</span></div>
                <div class="tree-row"><i class="tw"></i><b class="dots"></b><svg class="ic"><use href="#i-folder"/></svg><span>其它</span></div>
                <div class="tree-row"><i class="tw"></i><b class="dots"></b><svg class="ic"><use href="#i-folder"/></svg><span>自定义</span></div>
            </div>
        </div>

        <div class="prop-col">
            <div class="panel-head">
                <span>属性编辑器</span>
                <svg class="pin"><use href="#i-pin"/></svg>
                <svg class="x"><use href="#i-x"/></svg>
            </div>
            <div class="prop-box">
                <table class="prop-table">
                    <colgroup><col class="c-num"><col class="c-name"><col class="c-val"><col class="c-add"></colgroup>
                    <tr class="head-row"><th></th><th>属性名称</th><th class="val-head">属性值</th><th>附加</th></tr>
                    <tr class="sel-row"><td class="num">1</td><td class="name">名称</td><td class="val"><em>KL1(6)-2016</em></td><td></td></tr>
                    <tr><td class="num">2</td><td class="name link">类别</td><td class="val">楼层框架梁</td><td><i class="chk"></i></td></tr>
                    <tr><td class="num">3</td><td class="name">截面宽度<em>(mm)</em></td><td class="val"><em>300</em></td><td><i class="chk"></i></td></tr>
                    <tr><td class="num">4</td><td class="name">截面高度<em>(mm)</em></td><td class="val"><em>700</em></td><td><i class="chk"></i></td></tr>
                    <tr><td class="num">5</td><td class="name">轴线距梁左边线距</td><td class="val"><em>(150)</em></td><td><i class="chk"></i></td></tr>
                    <tr><td class="num">6</td><td class="name">跨数量</td><td class="val"><em>6</em></td><td><i class="chk"></i></td></tr>
                    <tr><td class="num">7</td><td class="name link">箍筋</td><td class="val"><em><i class="phi">Φ</i>8@100/200(2)</em></td><td><i class="chk"></i></td></tr>
                    <tr><td class="num">8</td><td class="name link">肢数</td><td class="val"><em>2</em></td><td></td></tr>
                    <tr><td class="num">9</td><td class="name link">上部通长筋</td><td class="val"><em>2<u class="phi">Φ</u>22</em></td><td><i class="chk"></i></td></tr>
                    <tr><td class="num">10</td><td class="name link">下部通长筋</td><td class="val"></td><td><i class="chk"></i></td></tr>
                    <tr><td class="num">11</td><td class="name link">侧面构造或受扭筋</td><td class="val"><em>G4<u class="phi">Φ</u>12</em></td><td><i class="chk"></i></td></tr>
                    <tr><td class="num">12</td><td class="name link">拉筋</td><td class="val"><em>(<i class="phi">Φ</i>6)</em></td><td><i class="chk"></i></td></tr>
                    <tr><td class="num">13</td><td class="name link">其它箍筋</td><td class="val"></td><td></td></tr>
                    <tr><td class="num">14</td><td class="name">备注</td><td class="val"></td><td><i class="chk"></i></td></tr>
                    <tr class="group-row"><td class="num">15</td><td class="name"><i class="plus">+</i>其它属性</td><td class="val"></td><td></td></tr>
                    <tr class="group-row"><td class="num">23</td><td class="name"><i class="plus">+</i>锚固搭接</td><td class="val"></td><td></td></tr>
                    <tr class="group-row"><td class="num">38</td><td class="name"><i class="plus">+</i>显示样式</td><td class="val"></td><td></td></tr>
                </table>
            </div>

            <div class="panel-head list-head">
                <span>构件列表</span>
                <svg class="pin"><use href="#i-pin"/></svg>
                <svg class="x"><use href="#i-x"/></svg>
            </div>
            <div class="list-tools">
                <svg class="ic"><use href="#i-add"/></svg><span class="list-new">新建</span><i class="arr tight"></i>
                <span class="list-del"></span>
                <svg class="ic"><use href="#i-dup"/></svg>
            </div>
            <div class="search-row">
                <span class="search-box">搜索构件...</span>
                <svg class="ic search-ic"><use href="#i-search"/></svg>
            </div>
            <div class="list-tree">
                <div class="list-row"><i class="tw open"></i><b class="dots"></b><svg class="ic"><use href="#i-beamroot"/></svg><span>识别梁</span></div>
                <div class="list-row list-child"><b class="branch"></b><div class="list-sel"><svg class="gear"><use href="#i-gear"/></svg><em>KL1(6)-2016</em></div></div>
                <div class="scroll-v"><i class="scroll-up"></i><i class="scroll-thumb"></i></div>
            </div>
        </div>

        <div class="right-col">
            <div class="bar-row r1">
                <div class="bar">
                    <div class="btn"><svg class="ic"><use href="#i-brush"/></svg>删除</div>
                    <b class="sep"></b>
                    <div class="btn"><svg class="ic"><use href="#i-copy"/></svg>复制</div>
                    <div class="btn"><svg class="ic"><use href="#i-mirror"/></svg>镜像</div>
                    <b class="sep"></b>
                    <div class="btn"><svg class="ic"><use href="#i-move"/></svg>移动</div>
                    <div class="btn"><svg class="ic"><use href="#i-rotate"/></svg>旋转</div>
                    <b class="sep"></b>
                    <div class="btn"><svg class="ic"><use href="#i-extend"/></svg>延伸</div>
                    <div class="btn"><svg class="ic"><use href="#i-trim"/></svg>修剪</div>
                    <b class="sep"></b>
                    <div class="btn"><svg class="ic"><use href="#i-break"/></svg>打断</div>
                    <div class="btn"><svg class="ic"><use href="#i-merge"/></svg>合并</div>
                    <div class="btn off"><svg class="ic"><use href="#i-split"/></svg>分割</div>
                    <b class="sep"></b>
                    <div class="btn"><svg class="ic"><use href="#i-align"/></svg>对齐<i class="arr tight"></i></div>
                    <div class="btn"><svg class="ic"><use href="#i-offset"/></svg>偏移</div>
                    <div class="btn"><svg class="ic"><use href="#i-stretch"/></svg>拉伸</div>
                    <b class="sep"></b>
                    <div class="btn off"><svg class="ic"><use href="#i-grippt"/></svg>设置夹点</div>
                </div>
            </div>
            <div class="bar-row r2">
                <div class="bar">
                    <div class="combo c57">第2层<i class="drop"></i></div>
                    <div class="combo c69">CAD识别<i class="drop"></i></div>
                    <div class="combo c69">识别梁<i class="drop"></i></div>
                    <div class="combo c69">KL1(6)-2(<i class="drop"></i></div>
                    <div class="combo c69 last-combo">分层1<i class="drop"></i></div>
                    <b class="sep"></b>
                    <div class="btn on"><svg class="ic"><use href="#i-props"/></svg>属性</div>
                    <div class="btn"><svg class="ic"><use href="#i-pen"/></svg>编辑钢筋</div>
                    <div class="btn on"><svg class="ic"><use href="#i-list"/></svg>构件列表</div>
                    <div class="btn"><svg class="ic"><use href="#i-pick"/></svg>拾取构件</div>
                </div>
                <div class="bar">
                    <div class="btn"><svg class="ic"><use href="#i-twopt"/></svg>两点</div>
                    <div class="btn"><svg class="ic"><use href="#i-parallel"/></svg>平行</div>
                    <div class="btn"><svg class="ic"><use href="#i-angle"/></svg>点角<i class="arr"></i></div>
                    <div class="btn"><svg class="ic"><use href="#i-arcaxis"/></svg>三点辅轴<i class="arr"></i></div>
                    <div class="btn"><svg class="ic"><use href="#i-brush"/></svg>删除辅轴</div>
                    <div class="btn"><svg class="ic"><use href="#i-dim"/></svg>尺寸标注<i class="arr"></i></div>
                </div>
            </div>
            <div class="bar-row r3">
                <div class="bar">
                    <div class="btn"><svg class="ic"><use href="#i-cursor"/></svg>选择<i class="arr"></i></div>
                    <b class="sep"></b>
                    <div class="btn on"><svg class="ic"><use href="#i-line"/></svg>直线</div>
                    <div class="btn"><svg class="ic"><use href="#i-ptlen"/></svg>点加长度</div>
                    <div class="btn"><svg class="ic"><use href="#i-arc"/></svg>三点画弧<i class="arr"></i></div>
                    <div class="combo c55"><i class="drop"></i></div>
                    <div class="btn"><svg class="ic"><use href="#i-rect"/></svg>矩形</div>
                    <b class="sep"></b>
                    <div class="btn"><svg class="ic"><use href="#i-mark"/></svg>原位标注<i class="arr"></i></div>
                    <div class="btn"><svg class="ic"><use href="#i-respan"/></svg>重提梁跨<i class="arr"></i></div>
                    <div class="btn"><svg class="ic"><use href="#i-apply"/></svg>应用到同名梁</div>
                </div>
                <div class="bar stub"></div>
            </div>
            <div class="bar-row r4">
                <div class="bar">
                    <div class="btn"><svg class="ic"><use href="#i-locate"/></svg>定位CAD图</div>
                    <div class="btn"><svg class="ic"><use href="#i-clear"/></svg>清除CAD图</div>
                    <div class="btn"><svg class="ic"><use href="#i-scale"/></svg>设置比例</div>
                    <div class="btn"><svg class="ic"><use href="#i-replace"/></svg>批量替换</div>
                    <div class="btn"><svg class="ic"><use href="#i-restore"/></svg>还原CAD图元</div>
                    <div class="btn"><svg class="ic"><use href="#i-patch"/></svg>补画CAD线</div>
                    <b class="sep"></b>
                    <div class="btn"><svg class="ic"><use href="#i-cadmark"/></svg>修改CAD标注</div>
                    <div class="btn"><svg class="ic"><use href="#i-pic"/></svg>图片管理<i class="arr tight"></i></div>
                </div>
            </div>
            <div class="bar-row r5">
                <div class="bar">
                    <div class="btn"><svg class="ic"><use href="#i-symbol"/></svg>转换符号</div>
                    <div class="btn"><svg class="ic"><use href="#i-beamtable"/></svg>识别连梁表</div>
                </div>
                <div class="bar">
                    <div class="btn"><svg class="ic"><use href="#i-edge"/></svg>提取梁边线</div>
                    <div class="btn"><svg class="ic"><use href="#i-label"/></svg>提取梁标注<i class="arr tight"></i></div>
                    <div class="btn"><svg class="ic"><use href="#i-recog"/></svg>识别梁<i class="arr tight"></i></div>
                    <div class="btn"><svg class="ic"><use href="#i-support"/></svg>查改支座<i class="arr tight"></i></div>
                    <div class="btn"><svg class="ic"><use href="#i-origmark"/></svg>识别原位标注<i class="arr tight"></i></div>
                    <div class="btn"><svg class="ic"><use href="#i-verify"/></svg>梁原位标注校核</div>
                    <div class="btn shift"><svg class="ic"><use href="#i-hanger"/></svg>识别吊筋<i class="arr tight"></i></div>
                    <div class="btn"><svg class="ic"><use href="#i-beamcomp"/></svg>识别梁构件</div>
                </div>
            </div>
            <div class="bar-row r6">
                <div class="bar">
                    <div class="btn on layer-btn"><svg class="ic"><use href="#i-layers"/></svg>图层设置</div>
                    <b class="sep"></b>
                    <div class="btn"><svg class="ic"><use href="#i-cadshow"/></svg>显示指定图层</div>
                    <div class="btn"><svg class="ic"><use href="#i-cadhide"/></svg>隐藏指定图层</div>
                    <b class="sep"></b>
                    <div class="btn"><svg class="ic"><use href="#i-cadsel"/></svg>选择同图层CAD图元</div>
                    <div class="btn"><svg class="ic"><use href="#i-cadsel2"/></svg>选择同颜色CAD图元</div>
                </div>
            </div>
            <div class="red-mark"></div>

            <div class="canvas">
                <svg class="drawing" width="1406" height="363" viewBox="481 245 1406 363">
                    <rect x="481" y="245" width="1406" height="363" fill="#000"/>
                    <g fill="#00f000">
                        <rect x="657" y="245" width="23" height="363"/>
                        <rect x="998" y="245" width="24" height="363"/>
                        <rect x="1336" y="245" width="25" height="363"/>
                        <rect x="1675" y="245" width="22" height="363"/>
                        <rect x="481" y="247" width="1406" height="23"/>
                        <rect x="481" y="538" width="1406" height="23"/>
                    </g>
                    <g fill="#7a00f0">
                        <rect x="649" y="245" width="47" height="25"/>
                        <rect x="1325" y="245" width="47" height="25"/>
                        <rect x="649" y="538" width="47" height="47"/>
                        <rect x="1325" y="538" width="47" height="47"/>
                    </g>
                    <g fill="none" stroke="#0a7a0a">
                        <polygon points="494,249 503,253 507,262 503,271 494,275 485,271 482,262 485,253"/>
                        <polygon points="494,532 503,536 507,545 503,554 494,558 485,554 482,545 485,536"/>
                        <circle cx="672.500" cy="258" r="12.500"/>
                        <circle cx="1348.500" cy="258" r="12.500"/>
                    </g>
                    <g class="axis-text">
                        <text x="491" y="268" textLength="7" lengthAdjust="spacingAndGlyphs" fill="#a860b0">F</text>
                        <text x="491" y="551" textLength="7" lengthAdjust="spacingAndGlyphs" fill="#b050c0">E</text>
                        <text x="670" y="264" textLength="8" lengthAdjust="spacingAndGlyphs" fill="#a0b060">6</text>
                        <text x="1345" y="264" textLength="8" lengthAdjust="spacingAndGlyphs" fill="#8c8c80">7</text>
                    </g>
                    <g stroke="#f00000">
                        <path d="M481 262.500H1887M481 545.500H1887" stroke-width="1.500"/>
                        <path d="M672.500 245V608M1347.500 245V608"/>
                    </g>
                    <path d="M1591.500 245V608" stroke="#a00000"/>
                </svg>
                <div class="coord coord-x"><span>35575.125</span></div>
                <div class="coord coord-y">34811.828</div>
            </div>
        </div>
    </div>
</body>

</html>
```

FILE: styles.css
```css
* {
    box-sizing: border-box;
}

html,
body {
    margin: 0;
    padding: 0;
    height: 608px;
    overflow: hidden;
}

body {
    display: flex;
    flex-direction: column;
    background-color: #f0f0f0;
    color: #111;
    font-family: "Liberation Sans", "Noto Sans CJK SC", sans-serif;
    font-size: 12px;
    line-height: 16px;
}

.defs {
    display: none;
}

em {
    font-family: "Liberation Mono", "Noto Sans CJK SC", monospace;
    font-size: 11px;
    font-style: normal;
    letter-spacing: -0.6px;
}

.ic {
    flex: none;
    width: 16px;
    height: 16px;
}

/* title bar */
.titlebar {
    display: flex;
    align-items: center;
    height: 22px;
    padding-left: 2px;
    background: linear-gradient(90deg, #d9e1e9 0, #d4dee8 28%, #c3d2e0 40%, #b4cde6 50%, #c4d9ee 58%, #aec8e2 70%, #a6c4e2 100%);
    border-bottom: 1px solid #4f5c6a;
}

.logo {
    width: 15px;
    height: 16px;
}

.title-text {
    margin-left: 4px;
    font-size: 12.650px;
    color: #1c1c1c;
}

.win-btns {
    display: flex;
    align-self: flex-start;
    height: 17px;
    margin-left: auto;
    border: 1px solid #5a6876;
    border-top: 0;
    border-right: 0;
    border-bottom-left-radius: 4px;
}

.win-btn {
    display: flex;
    align-items: center;
    justify-content: center;
    width: 28px;
    background: linear-gradient(#c8d4e0, #93a6ba);
    border-right: 1px solid #66788a;
}

.win-close {
    width: 16px;
    background: linear-gradient(#d88a78, #c04a38);
    border-right: 0;
}

.win-min {
    width: 12px;
    height: 6px;
    margin-top: 3px;
    background-color: #dde4ea;
    border: 1px solid #3c4854;
}

.win-max {
    width: 10px;
    height: 12px;
    background-color: #dde4ea;
    border: 1px solid #3c4854;
}

/* menu */
.menubar {
    display: flex;
    align-items: center;
    gap: 10px;
    height: 28px;
    padding-left: 7px;
}

.menu-change {
    display: flex;
    align-items: center;
    gap: 3px;
    margin-left: -2px;
}

.user-box {
    display: flex;
    align-items: center;
    gap: 4px;
    width: 184px;
    height: 22px;
    margin: -4px 0 0 auto;
    padding-left: 4px;
    background-color: #f8f8f8;
    border-radius: 3px 0 0 3px;
    white-space: nowrap;
    overflow: hidden;
}

.user-ic {
    height: 18px;
}

.user-phone {
    font-size: 13px;
}

.bell-ic {
    margin-left: 6px;
    margin-right: 5px;
}

/* toolbars */
.bar-row {
    display: flex;
    gap: 2px;
    padding-left: 4px;
}

.bar {
    display: flex;
    align-items: center;
    height: 100%;
    padding-left: 6px;
    padding-right: 1px;
    background-color: #f7f7f7;
    background-image: radial-gradient(circle, #9a9a9a 1px, transparent 1.200px), linear-gradient(#f9f9f9, #f6f6f6 70%, #f1f1f1);
    background-size: 3px 4px, auto;
    background-position: 1px center, 0 0;
    background-repeat: repeat-y, no-repeat;
    border-radius: 3px;
}

.btn {
    display: flex;
    align-items: center;
    flex: none;
    gap: 3px;
    height: 100%;
    padding: 0 4px;
    white-space: nowrap;
}

.btn.off {
    color: #8c8c8c;
}

.btn.on {
    height: 24px;
    padding: 0 3px;
    background-color: #e6f0fa;
    border: 1px solid #4a9ee8;
}

.btn.shift {
    margin-left: 1px;
}

.sep {
    flex: none;
    width: 1px;
    height: 18px;
    margin: 0 3px 0 2px;
    background-color: #b4b4b4;
}

.sep.tall {
    height: 25px;
    margin: 0 2px;
}

.arr {
    flex: none;
    width: 0;
    height: 0;
    margin-left: 2px;
    border: 3.500px solid transparent;
    border-top: 4px solid #111;
    border-bottom: 0;
}

.arr.off {
    border-top-color: #888;
}

.arr.tight {
    margin-left: 0;
    border-left-width: 2.500px;
    border-right-width: 2.500px;
    border-top-width: 3px;
}

.main-row {
    height: 28px;
    margin-bottom: 2px;
    padding-left: 2px;
}

.file-bar,
.no-grip {
    background-image: linear-gradient(#f9f9f9, #f6f6f6 70%, #f1f1f1);
    background-size: auto;
    background-repeat: no-repeat;
}

.file-bar {
    width: 160px;
    padding-left: 1px;
    padding-right: 0;
}

.no-grip {
    padding-left: 0;
}

.view-bar {
    margin-left: 3px;
}

.view-combo {
    width: 62px;
    padding: 0 0 0 3px;
    background-color: #fff;
}

.sigma {
    display: flex;
    justify-content: center;
    font-family: "DejaVu Serif", serif;
    font-size: 14px;
    font-weight: bold;
    color: #000;
}

.r1 {
    height: 25px;
    margin-bottom: 2px;
}

.r2 {
    height: 26px;
    margin-bottom: 3px;
}

.r3 {
    height: 26px;
    margin-bottom: 3px;
}

.r4 {
    height: 23px;
    margin-bottom: 4px;
}

.r5 {
    height: 25px;
    margin-bottom: 2px;
}

.r6 {
    height: 24px;
    margin-bottom: 2px;
}

.r1 .btn:first-child {
    margin-right: 1px;
}

.r3 .bar:first-child .btn:first-child,
.r4 .btn:first-child,
.r5 .bar:first-child .btn:first-child {
    margin-left: 1px;
}

.r5 .arr.tight {
    margin-right: 1px;
}

.r2 .combo:first-child {
    margin-left: 2px;
}

.r2 .bar + .bar .btn:first-child {
    margin-left: 1px;
}

.layer-btn {
    margin-left: 1px;
}

.stub {
    width: 31px;
}

.combo {
    display: flex;
    align-items: center;
    flex: none;
    height: 22px;
    margin-right: 3px;
    padding-left: 2px;
    background-color: #fff;
    white-space: nowrap;
    overflow: hidden;
}

.last-combo {
    margin-right: 2px;
}

.c55 {
    width: 55px;
    margin: 0 2px 0 1px;
}

.c57 {
    width: 57px;
}

.c69 {
    width: 69px;
}

.drop {
    display: flex;
    align-items: center;
    justify-content: center;
    flex: none;
    width: 11px;
    height: 22px;
    margin-left: auto;
    background-color: #f2f2f2;
}

.drop::after {
    content: "";
    border: 3px solid transparent;
    border-top: 4px solid #111;
    border-bottom: 0;
}

.red-mark {
    position: absolute;
    left: 734px;
    top: 104px;
    width: 85px;
    height: 43px;
    border: 3px solid #f21c12;
    border-radius: 3px;
}

/* panels */
.workarea {
    display: flex;
    flex: 1;
    min-height: 0;
}

.nav-panel {
    display: flex;
    flex-direction: column;
    flex: none;
    width: 165px;
    margin-right: 5px;
}

.panel-head {
    display: flex;
    align-items: center;
    flex: none;
    height: 16px;
    padding-right: 4px;
    background-color: #efefef;
    border: 1px solid #808080;
    border-radius: 2px 2px 0 0;
    font-size: 12.500px;
    color: #111;
    white-space: nowrap;
    overflow: hidden;
}

.pin {
    width: 10px;
    height: 10px;
    margin: 0 9px 0 auto;
    color: #111;
}

.x {
    width: 9px;
    height: 9px;
    color: #222;
}

.head-blue {
    margin-bottom: 1px;
    padding-right: 2px;
    background-color: #0a55e8;
    border: 0;
    border-radius: 0;
    color: #fff;
}

.head-blue .pin {
    margin-right: 4px;
    color: #fff;
}

.head-close {
    display: flex;
    align-items: center;
    justify-content: center;
    width: 17px;
    height: 13px;
    border: 1px solid #fff;
    color: #fff;
}

.head-close .x {
    color: #fff;
}

.nav-btn {
    flex: none;
    height: 22px;
    line-height: 20px;
    background: linear-gradient(#f6f6f6, #e4e4e4);
    border: 1px solid #a8a8a8;
    text-align: center;
}

.tree-tools {
    display: flex;
    align-items: center;
    gap: 8px;
    flex: none;
    height: 25px;
    margin-top: 2px;
    padding-left: 7px;
    background-color: #f8f8f8;
}

.tool-ic {
    width: 16px;
    height: 14px;
}

.tree {
    flex: 1;
    min-height: 0;
    margin-left: 2px;
    padding-top: 2px;
    background: #fff linear-gradient(#888 50%, transparent 50%) 12px 0 / 1px 2px repeat-y;
    border: 1px solid #a0a0a0;
    border-right: 2px solid #909090;
    border-bottom: 0;
    overflow: hidden;
}

.tree-row {
    display: flex;
    align-items: center;
    height: 16px;
    padding-left: 10px;
    white-space: nowrap;
}

.tree-row .ic {
    background-color: #fff;
}

.tree-row span {
    margin-left: 6px;
}

.tree-row.child {
    padding-left: 32px;
}

.tree-row.child span {
    margin-left: 5px;
}

.tw {
    flex: none;
    width: 7px;
    height: 9px;
    background-color: #c0c0c0;
    clip-path: polygon(0 0, 100% 50%, 0 100%);
}

.tw.open {
    height: 7px;
    background-color: #333;
    clip-path: polygon(100% 0, 100% 100%, 0 100%);
}

.dots {
    flex: none;
    width: 5px;
    height: 1px;
    background: repeating-linear-gradient(90deg, #777 0 1px, transparent 1px 2px);
}

.branch {
    flex: none;
    align-self: stretch;
    width: 11px;
    background:
        repeating-linear-gradient(90deg, #777 0 1px, transparent 1px 2px) 0 50% / 100% 1px no-repeat,
        linear-gradient(#777 50%, transparent 50%) 0 0 / 1px 2px repeat-y;
}

.branch.last {
    align-self: flex-start;
    height: 9px;
    background:
        repeating-linear-gradient(90deg, #777 0 1px, transparent 1px 2px) 0 100% / 100% 1px no-repeat,
        linear-gradient(#777 50%, transparent 50%) 0 0 / 1px 2px repeat-y;
}

/* property editor */
.prop-col {
    display: flex;
    flex-direction: column;
    flex: none;
    width: 308px;
}

.prop-box {
    flex: none;
    height: 401px;
    margin-top: -1px;
    padding: 1px 1px 0;
    background-color: #fff;
    border: 1px solid #9a9a9a;
}

.prop-table {
    width: 305px;
    table-layout: fixed;
    border-collapse: collapse;
}

.c-num {
    width: 21px;
}

.c-name {
    width: 121px;
}

.c-val {
    width: 132px;
}

.c-add {
    width: 31px;
}

.prop-table th,
.prop-table td {
    height: 19px;
    padding: 0;
    border: 1px solid #bdbdbd;
    font-weight: normal;
    white-space: nowrap;
    overflow: hidden;
}

.prop-table .head-row th {
    height: 23px;
    background-color: #f3f3f3;
    border-color: #cfcfcf;
}

.prop-table .val-head {
    background: linear-gradient(#fbe3a8, #f5c46a);
    color: #5a0a82;
}

.prop-table .num {
    background-color: #f1f1f1;
    text-align: center;
    font-family: "Liberation Mono", monospace;
    font-size: 11px;
    letter-spacing: -0.6px;
}

.prop-table .name {
    padding-left: 20px;
}

.prop-table .val {
    padding-left: 3px;
}

.prop-table .link {
    color: #0000f0;
}

.prop-table .sel-row .num {
    background-color: #f8cd85;
    color: #5a0a82;
}

.prop-table .sel-row .name {
    background-color: #3d93ea;
    color: #fff;
}

.prop-table .sel-row .val {
    background-color: #dff0ff;
}

.phi {
    display: inline-block;
    width: 12px;
    font-family: "Liberation Sans", sans-serif;
    font-size: 12px;
    font-style: normal;
    letter-spacing: 0;
    text-align: center;
}

.chk {
    display: block;
    width: 13px;
    height: 13px;
    margin: 0 auto;
    background: linear-gradient(135deg, #d8d8d8, #f4f4f4);
    border: 1px solid #8a8a8a;
    box-shadow: inset 0 0 0 1px #eee;
}

.prop-table .group-row .name {
    padding-left: 3px;
    color: #8a8a8a;
}

.plus {
    display: inline-flex;
    align-items: center;
    justify-content: center;
    width: 13px;
    height: 13px;
    margin-right: 4px;
    vertical-align: -2px;
    background-color: #e4e4e4;
    border: 1px solid #c8c8c8;
    color: #000;
    font-size: 14px;
    font-style: normal;
}

.list-head {
    margin-top: 6px;
}

.list-tools {
    display: flex;
    align-items: center;
    flex: none;
    height: 28px;
    padding-left: 5px;
    background-color: #f8f8f8;
}

.list-new {
    margin: 0 3px 0 4px;
}

.list-del {
    width: 13px;
    height: 13px;
    margin: 0 9px;
    background:
        linear-gradient(45deg, transparent 44%, #2a3240 44% 56%, transparent 56%),
        linear-gradient(-45deg, transparent 44%, #2a3240 44% 56%, transparent 56%);
}

.search-row {
    display: flex;
    align-items: center;
    flex: none;
    height: 24px;
    margin-top: 1px;
    margin-bottom: 1px;
}

.search-box {
    width: 282px;
    height: 24px;
    padding-left: 3px;
    line-height: 22px;
    background-color: #fff;
    border: 1px solid #d0d0d0;
    color: #8a8a8a;
}

.search-ic {
    margin-left: 5px;
}

.list-tree {
    position: relative;
    flex: 1;
    min-height: 0;
    background-color: #fff;
    border: 1px solid #909090;
    border-bottom: 0;
    overflow: hidden;
}

.list-row {
    display: flex;
    align-items: center;
    height: 16px;
    padding-left: 10px;
}

.list-row .ic {
    margin-left: 1px;
}

.list-row span {
    margin-left: 5px;
}

.list-child {
    padding-left: 31px;
}

.list-child .branch {
    width: 9px;
}

.list-sel {
    display: flex;
    align-items: center;
    width: 93px;
    height: 16px;
    padding-left: 5px;
    background-color: #2f6cc4;
    color: #0c0c1e;
}

.gear {
    width: 12px;
    height: 12px;
    margin-right: 6px;
}

.scroll-v {
    position: absolute;
    top: 0;
    right: 0;
    display: flex;
    flex-direction: column;
    align-items: center;
    width: 18px;
    height: 100%;
    background-color: #efefef;
}

.scroll-up {
    width: 0;
    height: 0;
    margin-top: 8px;
    border: 4px solid transparent;
    border-bottom: 4px solid #222;
    border-top: 0;
}

.scroll-thumb {
    width: 15px;
    height: 20px;
    margin-top: 7px;
    background: linear-gradient(90deg, #f4f4f4, #cfcfcf);
    border: 1px solid #9a9a9a;
    border-radius: 2px;
}

/* toolbars + drawing */
.right-col {
    position: relative;
    display: flex;
    flex-direction: column;
    flex: 1;
    min-width: 0;
}

.canvas {
    position: relative;
    flex: 1;
    margin-left: 3px;
    background-color: #000;
    overflow: hidden;
}

.drawing {
    display: block;
}

.axis-text text {
    font-family: "DejaVu Sans", sans-serif;
    font-size: 18px;
}

.coord {
    position: absolute;
    top: 6px;
    height: 18px;
    padding: 1px 1px 0;
    font-family: "Liberation Mono", monospace;
    font-size: 11px;
    line-height: 15px;
    letter-spacing: -0.6px;
}

.coord-x {
    left: 917px;
    width: 73px;
    background-color: #fff;
    border: 1px solid #777;
    color: #fff;
}

.coord-x span {
    display: inline-block;
    width: 56px;
    background-color: #3d93ea;
}

.coord-y {
    left: 995px;
    width: 72px;
    background-color: #18184f;
    border: 1px solid #666;
    color: #ddd;
}
```
